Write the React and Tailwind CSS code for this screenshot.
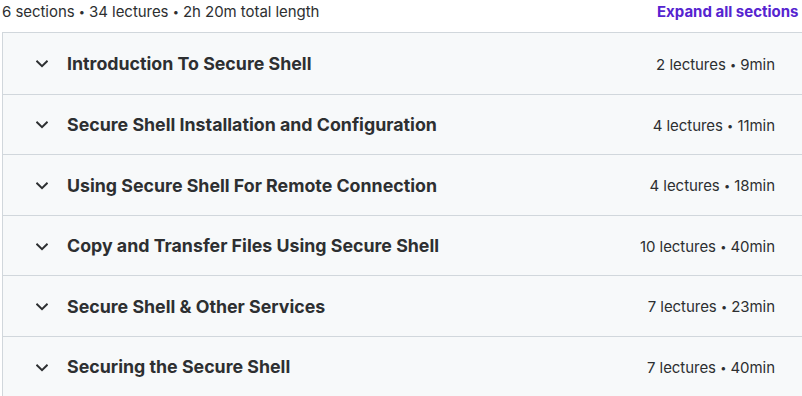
const sections = [
  { title: "Introduction To Secure Shell", meta: "2 lectures • 9min" },
  { title: "Secure Shell Installation and Configuration", meta: "4 lectures • 11min" },
  { title: "Using Secure Shell For Remote Connection", meta: "4 lectures • 18min" },
  { title: "Copy and Transfer Files Using Secure Shell", meta: "10 lectures • 40min" },
  { title: "Secure Shell & Other Services", meta: "7 lectures • 23min" },
  { title: "Securing the Secure Shell", meta: "7 lectures • 40min" },
];

const Chevron = () => (
  <svg width="12" height="8" viewBox="0 0 12 8" fill="none" className="mr-[19px] mt-[2px]">
    <path d="M1.2 1.5 L6 6.2 L10.8 1.5" stroke="#2d2f31" strokeWidth="2" strokeLinecap="square" />
  </svg>
);

const Meta = ({ text }) => {
  const [a, b] = text.split(" • ");
  return (
    <span className="text-[15px] tracking-[-0.05px] pt-[3px]">
      {a} <span className="text-[11px] align-[1px]">•</span> {b}
    </span>
  );
};

export default function App() {
  return (
    <div className="w-[802px] h-[396px] overflow-hidden bg-white text-[#2d2f31] font-['Inter',sans-serif]">
      <div className="w-[830px] pl-[2px]">
        <div className="flex items-center justify-between h-[32px] pb-[10px]">
          <span className="text-[15px] leading-none tracking-[-0.05px]">
            6 sections <span className="text-[11px] align-[1px]">•</span> 34 lectures{" "}
            <span className="text-[11px] align-[1px]">•</span> 2h 20m total length
          </span>
          <span className="text-[15px] leading-none font-bold text-[#5624d0] pr-[5px] w-[173px]">Expand all sections</span>
        </div>
        <div className="border border-[#d1d7dc]">
          {sections.map((s, i) => (
            <div
              key={i}
              className={`flex items-center h-[60.6px] bg-[#f7f9fa] pl-[33px] pr-[54px] ${i ? "border-t border-[#d1d7dc]" : ""}`}
            >
              <Chevron />
              <span className="flex-1 text-[17.8px] font-bold pt-[2px]">{s.title}</span>
              <Meta text={s.meta} />
            </div>
          ))}
        </div>
      </div>
    </div>
  );
}
